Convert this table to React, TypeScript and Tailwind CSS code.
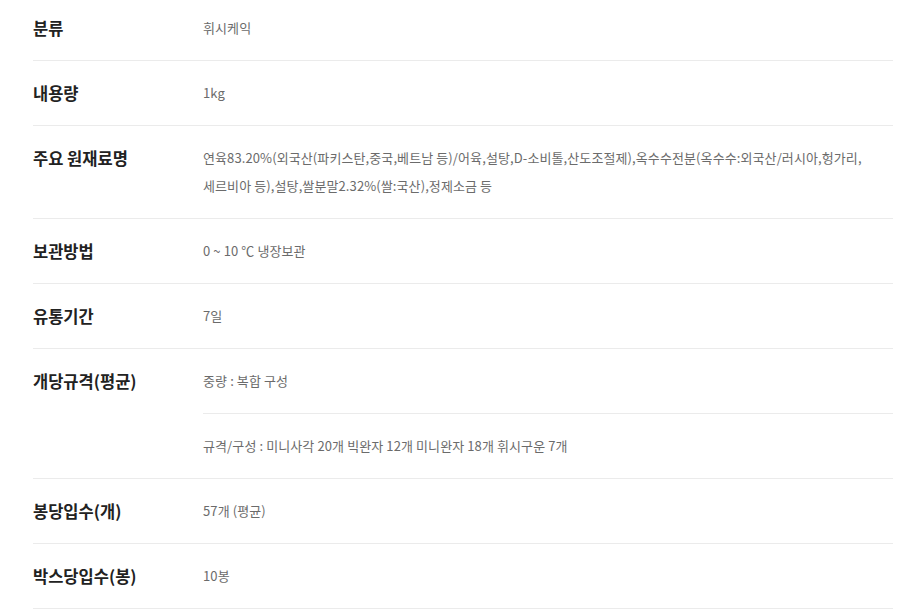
const font = { fontFamily: '"Noto Sans CJK KR", "Liberation Sans", sans-serif' };

type Row = { label: string; values: string[][] };

const rows: Row[] = [
  { label: "분류", values: [["휘시케익"]] },
  { label: "내용량", values: [["1kg"]] },
  {
    label: "주요 원재료명",
    values: [
      [
        "연육83.20%(외국산(파키스탄,중국,베트남 등)/어육,설탕,D-소비톨,산도조절제),옥수수전분(옥수수:외국산/러시아,헝가리,",
        "세르비아 등),설탕,쌀분말2.32%(쌀:국산),정제소금 등",
      ],
    ],
  },
  { label: "보관방법", values: [["0 ~ 10 ℃ 냉장보관"]] },
  { label: "유통기간", values: [["7일"]] },
  {
    label: "개당규격(평균)",
    values: [["중량 : 복합 구성"], ["규격/구성 : 미니사각 20개 빅완자 12개 미니완자 18개 휘시구운 7개"]],
  },
  { label: "봉당입수(개)", values: [["57개 (평균)"]] },
  { label: "박스당입수(봉)", values: [["10봉"]] },
];

export default function App() {
  return (
    <div className="w-[900px] h-[609px] overflow-hidden bg-white" style={font}>
      <div className="ml-[33px] w-[860px] -mt-[4px]">
        {rows.map((row) => (
          <div key={row.label} className="flex border-b border-[#ebebeb]">
            <div className="w-[170px] shrink-0 py-[18px] text-[16.5px] leading-[28px] font-bold text-[#222]">
              {row.label}
            </div>
            <div className="flex-1 flex flex-col">
              {row.values.map((lines, i) => (
                <div
                  key={i}
                  className={
                    i < row.values.length - 1
                      ? "py-[18px] text-[13px] leading-[28px] text-[#6b6b6b] tracking-[0.1px] border-b border-[#ebebeb]"
                      : "py-[18px] text-[13px] leading-[28px] text-[#6b6b6b] tracking-[0.1px]"
                  }
                >
                  {lines.map((l, j) => (
                    <div key={j} className="whitespace-nowrap">
                      {l}
                    </div>
                  ))}
                </div>
              ))}
            </div>
          </div>
        ))}
      </div>
    </div>
  );
}
